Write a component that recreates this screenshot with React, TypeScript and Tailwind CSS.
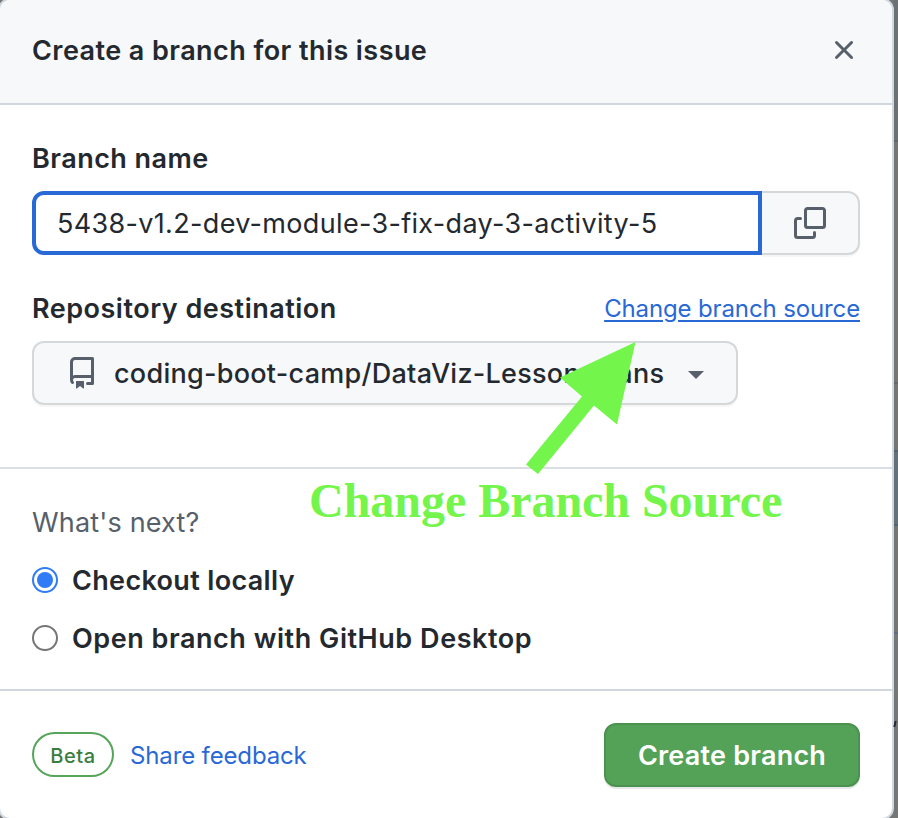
import type { ReactNode } from "react";

const paths = {
  close:
    "M3.72 3.72a.75.75 0 0 1 1.06 0L8 6.94l3.22-3.22a.749.749 0 0 1 1.275.326.749.749 0 0 1-.215.734L9.06 8l3.22 3.22a.749.749 0 0 1-.326 1.275.749.749 0 0 1-.734-.215L8 9.06l-3.22 3.22a.751.751 0 0 1-1.042-.018.751.751 0 0 1-.018-1.042L6.94 8 3.72 4.78a.75.75 0 0 1 0-1.06Z",
  copy: "M0 6.75C0 5.784.784 5 1.75 5h1.5a.75.75 0 0 1 0 1.5h-1.5a.25.25 0 0 0-.25.25v7.5c0 .138.112.25.25.25h7.5a.25.25 0 0 0 .25-.25v-1.5a.75.75 0 0 1 1.5 0v1.5A1.75 1.75 0 0 1 9.25 16h-7.5A1.75 1.75 0 0 1 0 14.25ZM5 1.75C5 .784 5.784 0 6.75 0h7.5C15.216 0 16 .784 16 1.75v7.5A1.75 1.75 0 0 1 14.25 11h-7.5A1.75 1.75 0 0 1 5 9.25Zm1.75-.25a.25.25 0 0 0-.25.25v7.5c0 .138.112.25.25.25h7.5a.25.25 0 0 0 .25-.25v-7.5a.25.25 0 0 0-.25-.25Z",
  repo: "M2 2.5A2.5 2.5 0 0 1 4.5 0h8.75a.75.75 0 0 1 .75.75v12.5a.75.75 0 0 1-.75.75h-2.5a.75.75 0 0 1 0-1.5h1.75v-2h-8a1 1 0 0 0-.714 1.7.75.75 0 1 1-1.072 1.05A2.495 2.495 0 0 1 2 11.5Zm10.5-1h-8a1 1 0 0 0-1 1v6.708A2.486 2.486 0 0 1 4.5 9h8ZM5 12.25a.25.25 0 0 1 .25-.25h3.5a.25.25 0 0 1 .25.25v3.25a.25.25 0 0 1-.4.2l-1.45-1.087a.249.249 0 0 0-.3 0L5.4 15.7a.25.25 0 0 1-.4-.2Z",
};

function Icon({ d }: { d: string }) {
  return (
    <svg viewBox="0 0 16 16" className="size-8 shrink-0 fill-[#57606a]" aria-hidden="true">
      <path d={d} />
    </svg>
  );
}

function RadioOption({ checked, children }: { checked?: boolean; children: ReactNode }) {
  return (
    <label className="flex h-[58px] items-center gap-[14px] text-[27px] font-semibold">
      <span
        className={
          checked
            ? "flex size-[26px] items-center justify-center rounded-full border-2 border-[#2f7cf6]"
            : "size-[26px] rounded-full border-2 border-[#767676]"
        }
      >
        {checked && <span className="size-4 rounded-full bg-[#2f7cf6]" />}
      </span>
      {children}
    </label>
  );
}

/* Dimmed page that shows beside the dialog */
function Backdrop() {
  return (
    <div className="flex w-1 shrink-0 flex-col">
      <div className="h-[142px] border-b-2 border-[#626667] bg-[#6c7274]" />
      <div className="h-[242px] border-b-2 border-[#656769] bg-[#757574]" />
      <div className="h-[68px] border-b-2 border-[#56636f] bg-[#757574]" />
      <div className="h-[74px] border-b-2 border-[#536477] bg-[#65717a]" />
      <div className="h-[108px] border-b-2 border-[#5f6d7c] bg-[#757574]" />
      <div className="flex-1 bg-[#757676] pt-[87px]">
        <div className="h-1.5 w-0.5 -skew-x-12 bg-[#24292f]" />
      </div>
    </div>
  );
}

export default function App() {
  return (
    <div className="relative flex h-[818px] w-[898px] overflow-hidden bg-[#757574] font-['Inter','Liberation_Sans',sans-serif] text-[#24292f]">
      <div className="-my-0.5 -ml-0.5 flex h-[822px] w-[896px] shrink-0 flex-col overflow-hidden rounded-[12px] border-2 border-[#d0d7de] bg-white">
        <header className="flex h-[105px] shrink-0 items-center justify-between border-b-2 border-[#d0d7de] bg-[#f6f8fa] pr-8 pb-[3px] pl-8">
          <h1 className="pt-0.5 text-[27px] font-semibold tracking-[0.43px]">Create a branch for this issue</h1>
          <Icon d={paths.close} />
        </header>

        <section className="h-[364px] shrink-0 border-b-2 border-[#d8dee4] px-8 pt-[38px]">
          <h2 className="h-12 text-[27px] leading-8 font-semibold tracking-[0.46px]">Branch name</h2>
          <div className="flex h-16">
            <div className="flex w-[730px] items-center rounded-l-[12px] border-4 border-[#2969d6] bg-white pl-[21px] text-[27px]">
              <span className="pt-0.5 tracking-[0.33px]">5438-v1.2-dev-module-3-fix-day-3-activity-5</span>
            </div>
            <button className="flex flex-1 items-center justify-center rounded-r-[12px] border-2 border-l-0 border-[#d5d8da] bg-[#f6f8fa] shadow-[0_2px_0_rgba(31,35,40,0.04)]">
              <Icon d={paths.copy} />
            </button>
          </div>
          <div className="flex h-[86px] items-center justify-between pt-[21px]">
            <h2 className="pt-0.5 text-[27px] font-semibold tracking-[0.5px]">Repository destination</h2>
            <a className="text-[24px] tracking-[-0.13px] text-[#2969d6] underline decoration-2 underline-offset-[3px]">
              Change branch source
            </a>
          </div>
          <button className="flex h-16 w-[706px] items-center rounded-[12px] border-2 border-[#d5d8da] bg-[#f6f8fa] pl-8 shadow-[0_2px_0_rgba(31,35,40,0.04)]">
            <Icon d={paths.repo} />
            <span className="ml-4 w-[550px] pt-0.5 text-left text-[27px] font-medium tracking-[0.27px] whitespace-nowrap">
              coding-boot-camp/DataViz-Lesson-Plans
            </span>
            <span className="mt-1 ml-6 border-x-8 border-t-8 border-x-transparent border-t-[#57606a]" />
          </button>
        </section>

        <section className="h-[222px] shrink-0 border-b-2 border-[#d0d7de] px-8 pt-[38px]">
          <p className="h-11 text-[27px] leading-8 tracking-[0.17px] text-[#57606a]">What's next?</p>
          <RadioOption checked>
            <span className="pt-0.5 tracking-[0.34px]">Checkout locally</span>
          </RadioOption>
          <RadioOption>
            <span className="pt-0.5 tracking-[0.54px]">Open branch with GitHub Desktop</span>
          </RadioOption>
        </section>

        <footer className="flex h-[128px] items-center px-8">
          <span className="flex h-[45px] w-[82px] items-center justify-center rounded-full border-2 border-[#57a55a] pt-0.5 text-[20px] font-medium tracking-[0.6px] text-[#3b7d3f]">
            Beta
          </span>
          <a className="ml-4 pt-0.5 text-[24px] tracking-[-0.14px] text-[#2969d6]">Share feedback</a>
          <button className="ml-auto flex h-16 w-64 items-center justify-center rounded-[12px] border-2 border-[#4b9150] bg-[#54a158] text-[27px] font-semibold text-white shadow-[0_2px_0_rgba(31,35,40,0.1)]">
            <span className="pt-[3px] tracking-[0.22px]">Create branch</span>
          </button>
        </footer>
      </div>
      <Backdrop />

      {/* Annotation drawn over the dialog */}
      <svg className="pointer-events-none absolute top-0 left-0" width="898" height="818" aria-hidden="true">
        <polygon points="635.5,342 560,377.5 582,396.5 526,464.5 538,474 594,405.5 617,424.5" fill="#73f54b" />
      </svg>
      <p className="absolute top-[473px] left-[309px] font-['Liberation_Serif',serif] text-[48px] leading-[56px] font-bold tracking-[-0.03px] whitespace-nowrap text-[#73f54b]">
        Change Branch Source
      </p>
    </div>
  );
}
